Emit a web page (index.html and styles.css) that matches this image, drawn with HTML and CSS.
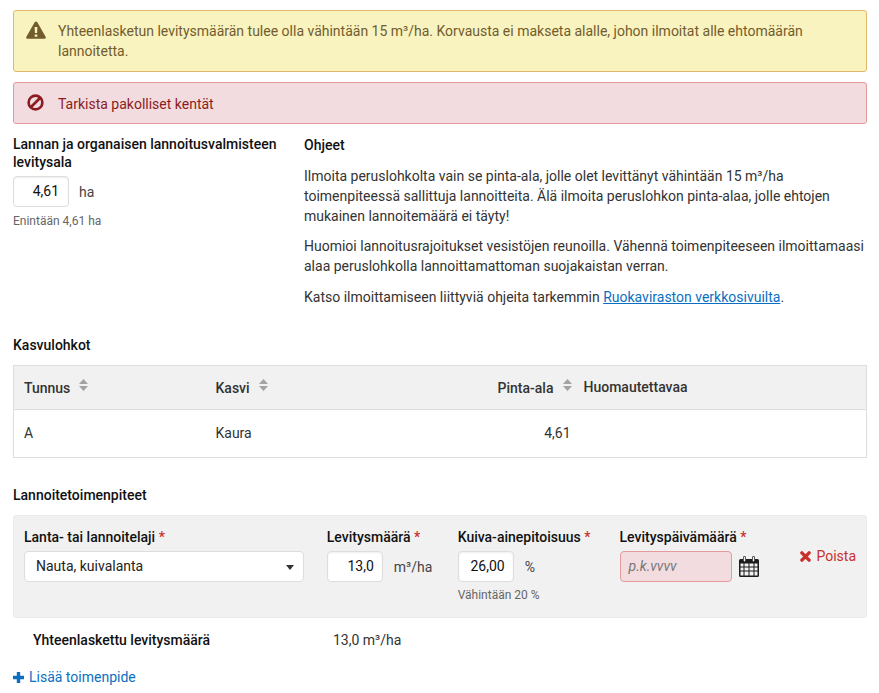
FILE: index.html
```html
<!DOCTYPE html>
<html lang="fi">
<head>
<meta charset="utf-8">
<title>Lannoitus</title>
<link rel="stylesheet" href="styles.css">
</head>
<body>
<div class="alert alert-warning">
  <svg class="alert-icon warn-icon" viewBox="0 0 20 18"><path fill="#725c2d" fill-rule="evenodd" d="M10 .4c.5 0 .9.3 1.200.7l8.400 14.700c.6 1-.1 2-1.200 2H1.600c-1.100 0-1.800-1-1.200-2L8.800 1.100C9.100.7 9.500.4 10 .4zM8.600 6l.3 6h2.200l.3-6zM8.700 13.400v2.300h2.600v-2.300z"/></svg>
  <div>Yhteenlasketun levitysmäärän tulee olla vähintään 15 m³/ha. Korvausta ei makseta alalle, johon ilmoitat alle ehtomäärän lannoitetta.</div>
</div>
<div class="alert alert-danger">
  <svg class="alert-icon ban-icon" viewBox="0 0 18 18"><circle cx="9" cy="9" r="7.300" fill="none" stroke="#8b1c22" stroke-width="2.800"/><path d="M14 4L4 14" stroke="#8b1c22" stroke-width="2.800"/></svg>
  <div class="danger-text">Tarkista pakolliset kentät</div>
</div>
<div class="intro">
  <div class="intro-left">
    <div class="intro-label">Lannan ja organaisen lannoitusvalmisteen levitysala</div>
    <div class="input-row">
      <div class="num-input area-input">4,61</div>
      <span class="unit">ha</span>
    </div>
    <div class="help help-area">Enintään 4,61 ha</div>
  </div>
  <div class="intro-right">
    <h4 class="guide-title">Ohjeet</h4>
    <p>Ilmoita peruslohkolta vain se pinta-ala, jolle olet levittänyt vähintään 15 m³/ha toimenpiteessä sallittuja lannoitteita. Älä ilmoita peruslohkon pinta-alaa, jolle ehtojen mukainen lannoitemäärä ei täyty!</p>
    <p>Huomioi lannoitusrajoitukset vesistöjen reunoilla. Vähennä toimenpiteeseen ilmoittamaasi alaa peruslohkolla lannoittamattoman suojakaistan verran.</p>
    <p>Katso ilmoittamiseen liittyviä ohjeita tarkemmin <a class="link" href="#">Ruokaviraston verkkosivuilta</a>.</p>
  </div>
</div>
<h4 class="section-title crops-title">Kasvulohkot</h4>
<table class="crops">
  <thead>
    <tr>
      <th class="c1"><span class="th-text">Tunnus</span><svg class="sort" viewBox="0 0 9 12"><path fill="#a3a3a3" d="M4.500 0L9 5H0zM0 7h9l-4.500 5z"/></svg></th>
      <th class="c2"><span class="th-text">Kasvi</span><svg class="sort" viewBox="0 0 9 12"><path fill="#a3a3a3" d="M4.500 0L9 5H0zM0 7h9l-4.500 5z"/></svg></th>
      <th class="c3"><span class="th-text">Pinta-ala</span><svg class="sort" viewBox="0 0 9 12"><path fill="#a3a3a3" d="M4.500 0L9 5H0zM0 7h9l-4.500 5z"/></svg></th>
      <th class="c4">Huomautettavaa</th>
    </tr>
  </thead>
  <tbody>
    <tr>
      <td>A</td>
      <td>Kaura</td>
      <td class="num">4,61</td>
      <td></td>
    </tr>
  </tbody>
</table>
<h4 class="section-title ops-title">Lannoitetoimenpiteet</h4>
<div class="panel">
  <div class="field f-type">
    <div class="field-label">Lanta- tai lannoitelaji <span class="req">*</span></div>
    <div class="select">Nauta, kuivalanta<span class="caret"></span></div>
  </div>
  <div class="field f-rate">
    <div class="field-label">Levitysmäärä <span class="req">*</span></div>
    <div class="input-row">
      <div class="num-input w56">13,0</div>
      <span class="unit">m³/ha</span>
    </div>
  </div>
  <div class="field f-dry">
    <div class="field-label">Kuiva-ainepitoisuus <span class="req">*</span></div>
    <div class="input-row">
      <div class="num-input w56">26,00</div>
      <span class="unit">%</span>
    </div>
    <div class="help help-dry">Vähintään 20 %</div>
  </div>
  <div class="field f-date">
    <div class="field-label">Levityspäivämäärä <span class="req">*</span></div>
    <div class="date-row">
      <div class="date-input">p.k.vvvv</div>
      <svg class="cal" viewBox="0 0 20 21"><path fill="#1b1b1b" fill-rule="evenodd" d="M1.500 3H4V1.500a1.500 1.500 0 0 1 3 0V3h6V1.500a1.500 1.500 0 0 1 3 0V3h2.500A1.500 1.500 0 0 1 20 4.500v15a1.500 1.500 0 0 1-1.500 1.500h-17A1.500 1.500 0 0 1 0 19.500v-15A1.500 1.500 0 0 1 1.500 3zM4.700 1.500v3.200a.8.8 0 0 0 1.600 0V1.500a.8.8 0 0 0-1.600 0zm9 0v3.200a.8.8 0 0 0 1.600 0V1.500a.8.8 0 0 0-1.600 0zM1.500 7.500v3h3v-3zm4 0v3h4v-3zm5 0v3h4v-3zm5 0v3h3v-3zM1.500 11.500v3h3v-3zm4 0v3h4v-3zm5 0v3h4v-3zm5 0v3h3v-3zM1.500 15.500v4h3v-4zm4 0v4h4v-4zm5 0v4h4v-4zm5 0v4h3v-4z"/></svg>
    </div>
  </div>
  <a class="remove" href="#"><svg class="x-icon" viewBox="0 0 11 11"><path d="M1.900 1.900l7.200 7.200M9.100 1.900L1.900 9.100" stroke="#c9302c" stroke-width="3.400" stroke-linecap="round"/></svg>Poista</a>
</div>
<div class="total">
  <div class="total-label">Yhteenlaskettu levitysmäärä</div>
  <div class="total-value">13,0 m³/ha</div>
</div>
<a class="add" href="#"><svg class="plus-icon" viewBox="0 0 11 11"><path d="M5.500 0v11M0 5.500h11" stroke="#0a6fc2" stroke-width="3.400"/></svg>Lisää toimenpide</a>
</body>
</html>
```
FILE: styles.css
```css
* { box-sizing: border-box; }
html, body { margin: 0; height: 693px; overflow: hidden; }
body {
  padding: 10px 12px 0 13px;
  background: #fff;
  color: #333;
  font: 14px/20px Roboto, sans-serif;
}
.alert {
  display: flex;
  align-items: flex-start;
  padding: 10px 12px;
  margin-bottom: 10px;
  border: 1px solid;
  border-radius: 3px;
}
.alert-warning { background: #f9f3c0; border-color: #e2b868; color: #725c2d; }
.alert-danger { background: #f2dcdf; border-color: #e59a9d; color: #8b1c22; height: 42px; }
.alert-icon { flex: none; }
.warn-icon { width: 20px; height: 18px; margin-right: 12px; }
.ban-icon { width: 17px; height: 17px; margin: 1px 14px 0 1px; }
.danger-text { padding-top: 1px; }
.intro { display: flex; margin-top: 2px; }
.intro-left { width: 291px; padding-right: 14px; }
.intro-right { flex: 1; }
.intro-label { font-weight: 500; color: #111; line-height: 18px; margin-top: 1px; }
.input-row { display: flex; align-items: center; }
.intro-left .input-row { margin-top: 5px; }
.num-input {
  height: 31px;
  padding: 0 8px;
  background: #fff;
  border: 1px solid #ddd;
  border-radius: 4px;
  box-shadow: inset 0 1px 2px rgba(0,0,0,.07);
  color: #111;
  text-align: right;
  line-height: 29px;
}
.area-input { width: 56px; padding-right: 9px; }
.w56 { width: 56px; }
.unit { margin-left: 10px; color: #444; }
.f-rate .unit, .f-dry .unit { margin-left: 11px; }
.help { font-size: 12px; line-height: 16px; color: #666; }
.help-area { margin-top: 6px; }
.guide-title { margin: 0; padding-top: 1px; font-size: 14px; line-height: 20px; font-weight: 500; color: #111; }
.intro-right p { margin: 11px 0 0; color: #333; }
.intro-right p + p { margin-top: 10px; }
.intro-right p:last-child { margin-top: 11px; }
.link { color: #0a6fc2; text-decoration: underline; }
.section-title { margin: 0; font-size: 14px; line-height: 20px; font-weight: 500; color: #111; }
.crops-title { margin-top: 28px; }
.crops {
  width: 854px;
  margin-top: 10px;
  border-collapse: collapse;
  border: 1px solid #ddd;
  table-layout: fixed;
}
.crops th {
  height: 44px;
  padding: 0 0 0 10px;
  background: #f1f1f1;
  border-bottom: 1px solid #ddd;
  font-weight: 500;
  text-align: left;
  color: #333;
  white-space: nowrap;
}
.crops td { height: 48px; padding: 0 0 2px 10px; color: #333; }
.crops .c1 { width: 192px; }
.crops .c2 { width: 201px; }
.crops .c3 { width: 165px; padding-left: 0; text-align: right; }
.crops .c4 { vertical-align: top; padding-top: 11px; padding-left: 12px; }
.crops .num { text-align: right; padding: 0 1px 2px 0; }
.sort { width: 9px; height: 12px; margin-left: 9px; vertical-align: 2px; }
.ops-title { margin-top: 27px; }
.panel {
  display: flex;
  align-items: flex-start;
  height: 103px;
  margin-top: 10px;
  padding: 11px 10px 0;
  background: #f1f1f1;
  border-radius: 3px;
  border: 1px solid #ebebeb;
}
.field-label { font-weight: 500; color: #111; line-height: 20px; margin-bottom: 4px; white-space: nowrap; }
.req { color: #c9302c; }
.f-type { width: 303px; }
.f-rate { width: 131px; }
.f-dry { width: 162px; }
.f-date { width: 181px; }
.select {
  position: relative;
  width: 280px;
  height: 31px;
  padding: 0 11px;
  background: #fff;
  border: 1px solid #ddd;
  border-radius: 4px;
  color: #222;
  line-height: 29px;
}
.caret {
  position: absolute;
  right: 9px;
  top: 13px;
  border: 4px solid transparent;
  border-top: 5px solid #333;
  border-bottom: 0;
}
.help-dry { margin-top: 5px; }
.date-row { display: flex; align-items: center; }
.date-input {
  width: 112px;
  height: 31px;
  padding: 0 8px;
  background: #f2dcdf;
  border: 1px solid #e59a9d;
  border-radius: 4px;
  color: #777;
  font-style: italic;
  line-height: 29px;
}
.cal { width: 20px; height: 21px; margin-left: 7px; }
.remove {
  display: flex;
  align-items: center;
  margin-top: 19px;
  color: #c9302c;
  text-decoration: none;
  white-space: nowrap;
}
.x-icon { width: 11px; height: 11px; margin-right: 5px; }
.total { display: flex; margin-top: 12px; }
.total-label { width: 300px; padding-left: 20px; font-weight: 500; color: #111; }
.total-value { margin-left: 20px; color: #333; }
.add {
  display: flex;
  align-items: center;
  margin-top: 17px;
  color: #0a6fc2;
  text-decoration: none;
}
.plus-icon { width: 11px; height: 11px; margin-right: 5px; }
```
